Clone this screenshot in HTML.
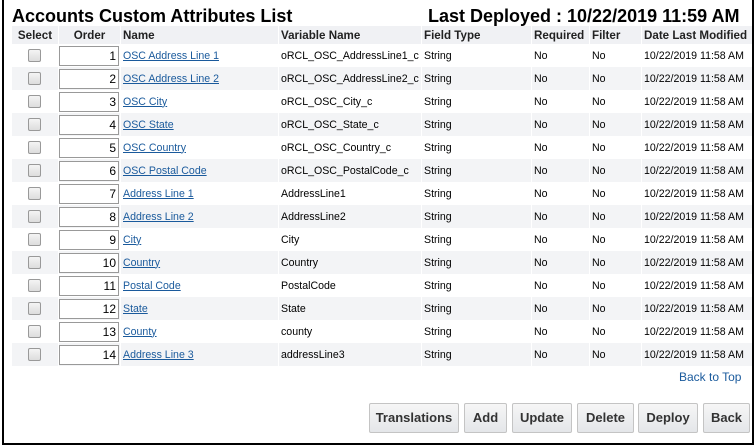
<!DOCTYPE html>
<html><head><style>
body{margin:0;width:756px;height:445px;background:#fff;font-family:"Liberation Sans",Arial,sans-serif;position:relative;overflow:hidden}
.box{position:absolute;left:2px;top:-2px;width:748px;height:443px;border:2px solid #000;z-index:5}
h1{position:absolute;margin:0;top:6px;font-size:18px;font-weight:bold;color:#000}
table{position:absolute;left:11px;top:26px;border-collapse:separate;border-spacing:1px 0;font-size:10.6px;color:#000;table-layout:fixed;width:741px}
th{background:#f0f1f4;font-weight:bold;font-size:11.6px;height:18px;text-align:left;padding:0 0 0 2px;color:#222;white-space:nowrap;overflow:hidden}
td{height:23px;padding:0 0 0 2px;white-space:nowrap;overflow:hidden}
tr.alt td{background:#f3f4f6}
.cb{display:inline-block;width:11px;height:11px;border:1px solid #999;border-radius:2px;background:linear-gradient(#f4f4f4,#ddd);margin-left:14px;vertical-align:middle}
.in{display:block;width:56px;height:18px;border:1px solid #999;background:#fff;text-align:right;font-size:12px;line-height:18px;padding-right:2px;margin-left:-2px}
a{color:#1a5a9c;text-decoration:underline}
.btn{position:absolute;top:403px;height:28px;border:1px solid #c4c4c4;border-radius:2px;background:linear-gradient(#f6f6f6,#e4e6e9);font-size:13px;font-weight:bold;color:#333;text-align:center;line-height:28px}
</style></head><body>
<div class="box"></div>
<h1 style="left:12px">Accounts Custom Attributes List</h1>
<h1 style="left:428px">Last Deployed : 10/22/2019 11:59 AM</h1>
<table>
<colgroup><col style="width:46px"><col style="width:61px"><col style="width:157px"><col style="width:142px"><col style="width:109px"><col style="width:57px"><col style="width:51px"><col style="width:110px"></colgroup>
<tr><th style="text-align:center;padding:0">Select</th><th style="text-align:center;padding:0">Order</th><th>Name</th><th>Variable Name</th><th>Field Type</th><th>Required</th><th>Filter</th><th>Date Last Modified</th></tr>
<tr><td><span class="cb"></span></td><td><span class="in">1</span></td><td><a>OSC Address Line 1</a></td><td>oRCL_OSC_AddressLine1_c</td><td>String</td><td>No</td><td>No</td><td>10/22/2019 11:58 AM</td></tr>
<tr class="alt"><td><span class="cb"></span></td><td><span class="in">2</span></td><td><a>OSC Address Line 2</a></td><td>oRCL_OSC_AddressLine2_c</td><td>String</td><td>No</td><td>No</td><td>10/22/2019 11:58 AM</td></tr>
<tr><td><span class="cb"></span></td><td><span class="in">3</span></td><td><a>OSC City</a></td><td>oRCL_OSC_City_c</td><td>String</td><td>No</td><td>No</td><td>10/22/2019 11:58 AM</td></tr>
<tr class="alt"><td><span class="cb"></span></td><td><span class="in">4</span></td><td><a>OSC State</a></td><td>oRCL_OSC_State_c</td><td>String</td><td>No</td><td>No</td><td>10/22/2019 11:58 AM</td></tr>
<tr><td><span class="cb"></span></td><td><span class="in">5</span></td><td><a>OSC Country</a></td><td>oRCL_OSC_Country_c</td><td>String</td><td>No</td><td>No</td><td>10/22/2019 11:58 AM</td></tr>
<tr class="alt"><td><span class="cb"></span></td><td><span class="in">6</span></td><td><a>OSC Postal Code</a></td><td>oRCL_OSC_PostalCode_c</td><td>String</td><td>No</td><td>No</td><td>10/22/2019 11:58 AM</td></tr>
<tr><td><span class="cb"></span></td><td><span class="in">7</span></td><td><a>Address Line 1</a></td><td>AddressLine1</td><td>String</td><td>No</td><td>No</td><td>10/22/2019 11:58 AM</td></tr>
<tr class="alt"><td><span class="cb"></span></td><td><span class="in">8</span></td><td><a>Address Line 2</a></td><td>AddressLine2</td><td>String</td><td>No</td><td>No</td><td>10/22/2019 11:58 AM</td></tr>
<tr><td><span class="cb"></span></td><td><span class="in">9</span></td><td><a>City</a></td><td>City</td><td>String</td><td>No</td><td>No</td><td>10/22/2019 11:58 AM</td></tr>
<tr class="alt"><td><span class="cb"></span></td><td><span class="in">10</span></td><td><a>Country</a></td><td>Country</td><td>String</td><td>No</td><td>No</td><td>10/22/2019 11:58 AM</td></tr>
<tr><td><span class="cb"></span></td><td><span class="in">11</span></td><td><a>Postal Code</a></td><td>PostalCode</td><td>String</td><td>No</td><td>No</td><td>10/22/2019 11:58 AM</td></tr>
<tr class="alt"><td><span class="cb"></span></td><td><span class="in">12</span></td><td><a>State</a></td><td>State</td><td>String</td><td>No</td><td>No</td><td>10/22/2019 11:58 AM</td></tr>
<tr><td><span class="cb"></span></td><td><span class="in">13</span></td><td><a>County</a></td><td>county</td><td>String</td><td>No</td><td>No</td><td>10/22/2019 11:58 AM</td></tr>
<tr class="alt"><td><span class="cb"></span></td><td><span class="in">14</span></td><td><a>Address Line 3</a></td><td>addressLine3</td><td>String</td><td>No</td><td>No</td><td>10/22/2019 11:58 AM</td></tr>
</table>
<div style="position:absolute;left:679px;top:370px;font-size:12px;color:#1a5a9c">Back to Top</div>
<div class="btn" style="left:369px;width:88px">Translations</div>
<div class="btn" style="left:464px;width:41px">Add</div>
<div class="btn" style="left:512px;width:58px">Update</div>
<div class="btn" style="left:577px;width:55px">Delete</div>
<div class="btn" style="left:638px;width:58px">Deploy</div>
<div class="btn" style="left:703px;width:45px">Back</div>
</body></html>
